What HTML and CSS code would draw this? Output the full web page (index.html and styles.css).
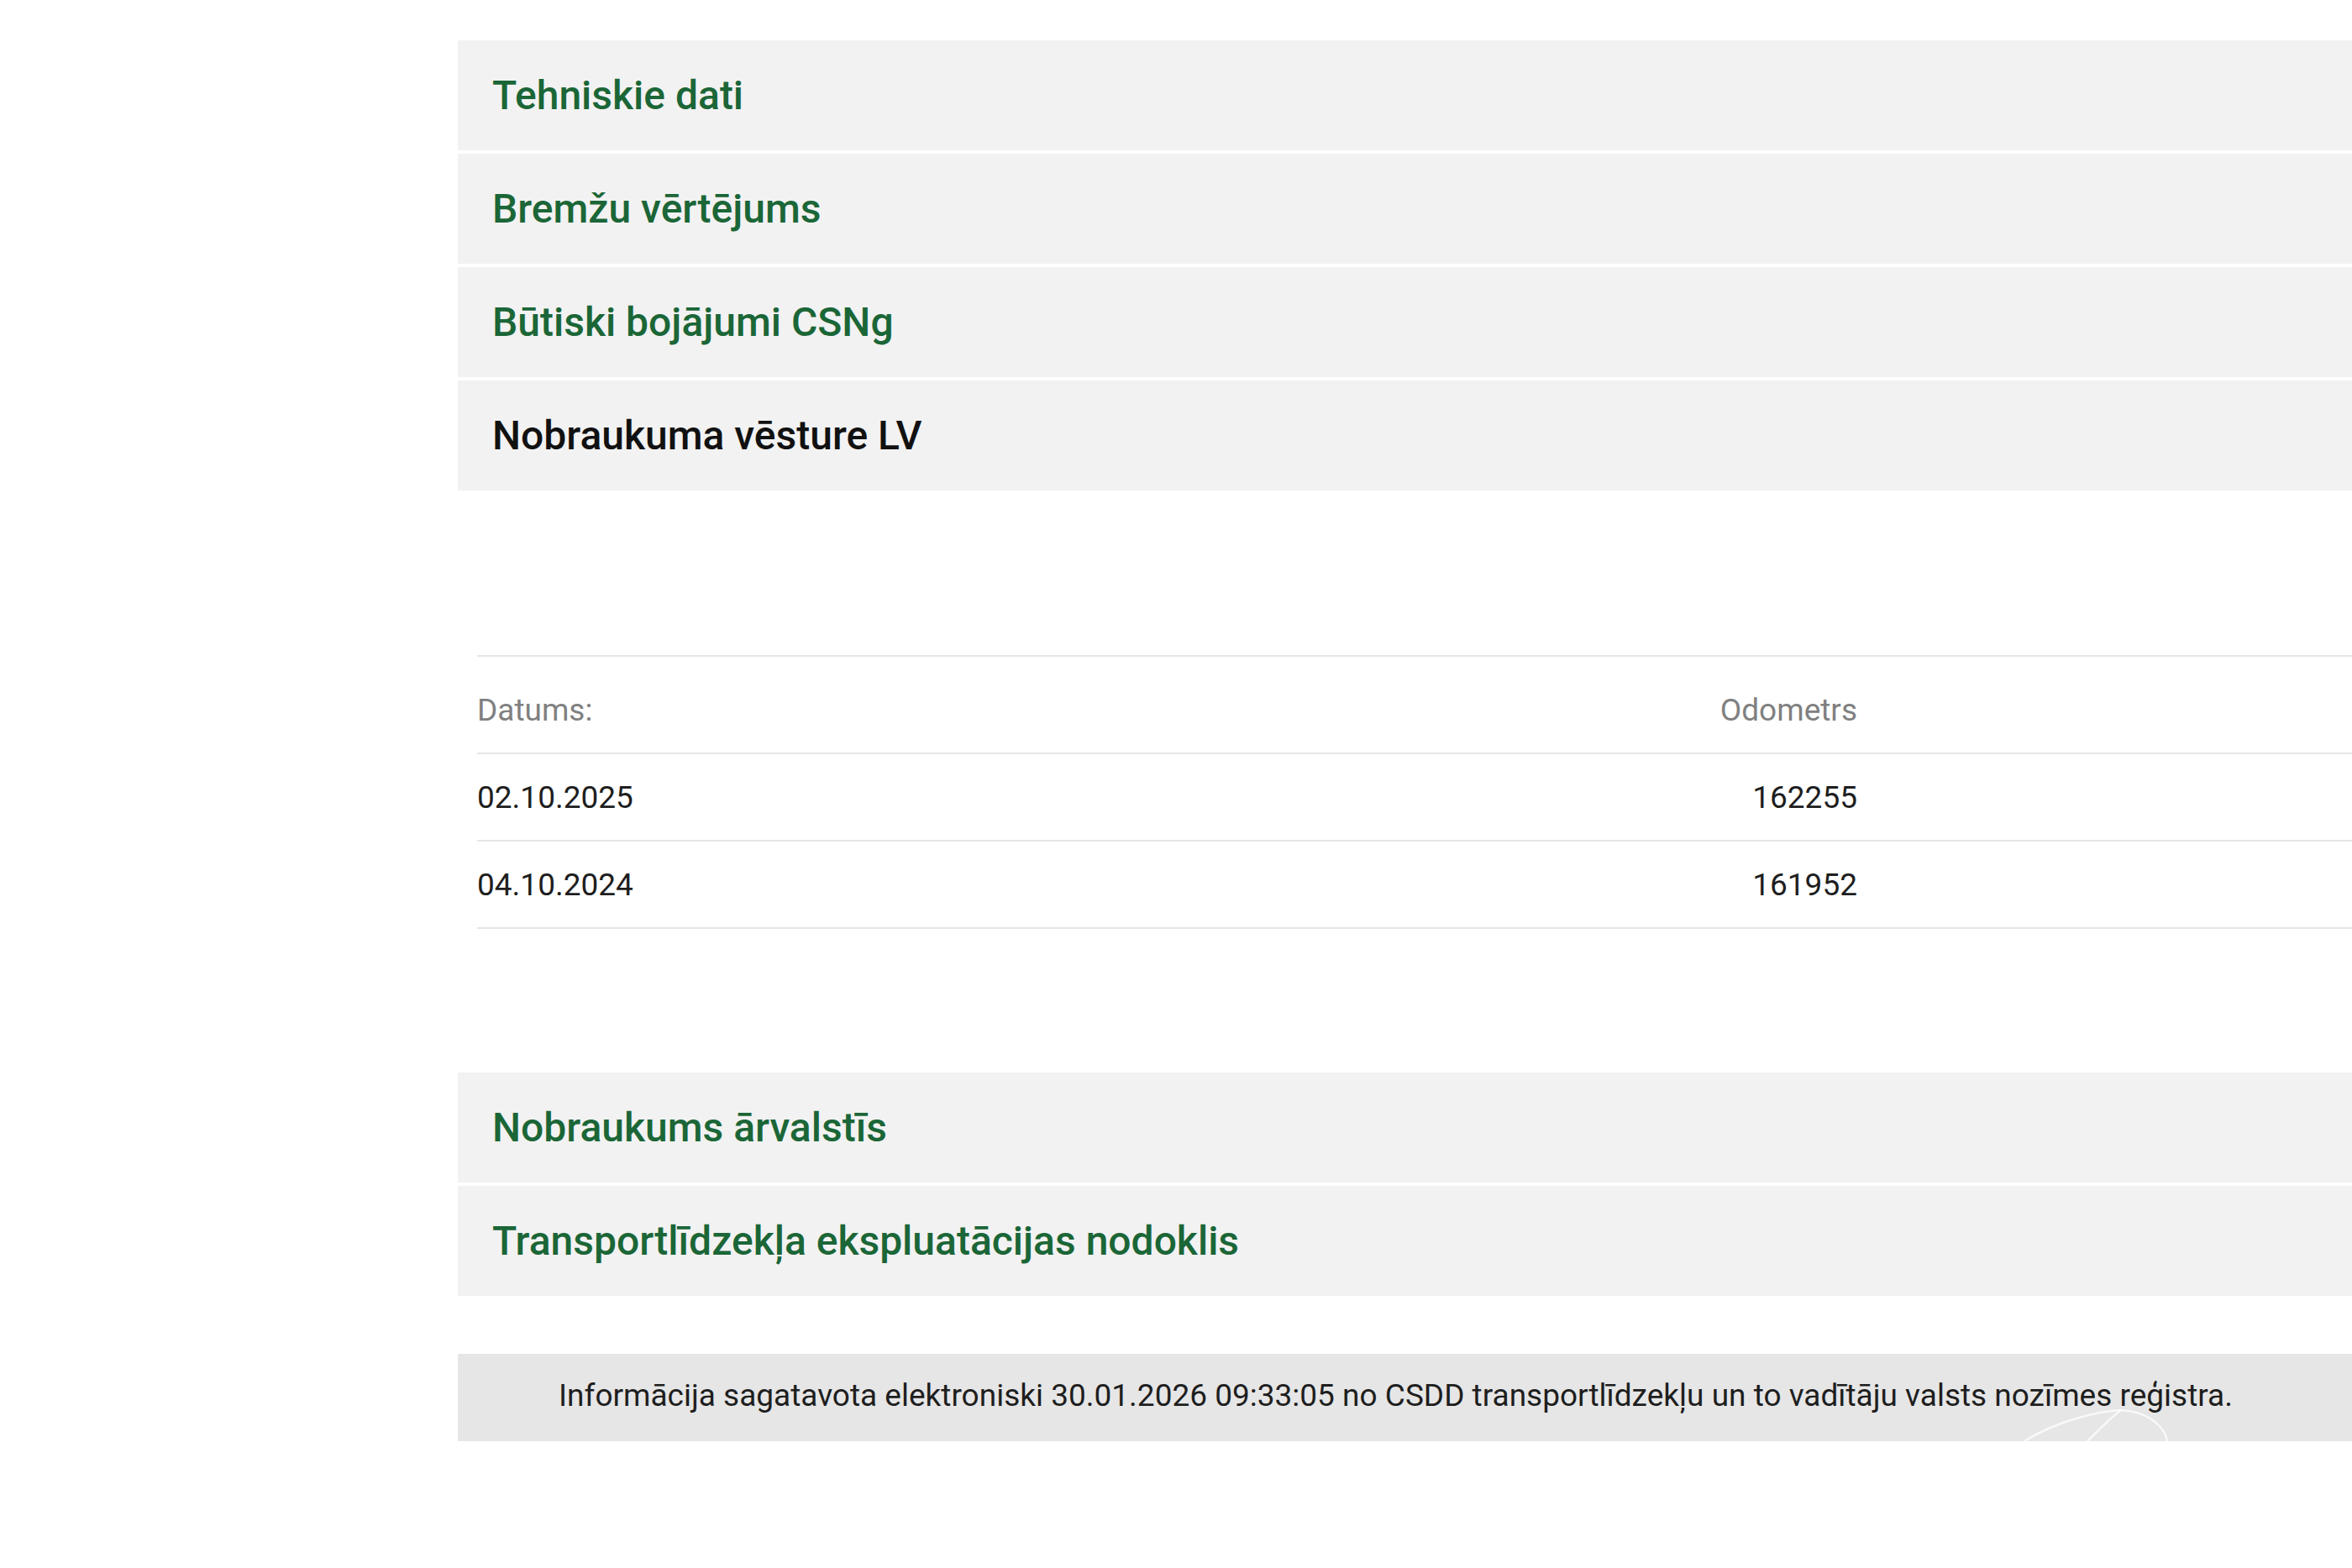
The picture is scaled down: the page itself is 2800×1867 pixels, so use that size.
FILE: index.html
```html
<!DOCTYPE html>
<html lang="lv">
<head>
    <meta charset="UTF-8">
    <title>Transportlīdzekļa informācija</title>
    <link rel="stylesheet" href="styles.css">
</head>
<body>
    <div id="content">
        <div class="acc-group">
            <div class="acc-head">Tehniskie dati</div>
            <div class="acc-head">Bremžu vērtējums</div>
            <div class="acc-head">Būtiski bojājumi CSNg</div>
            <div class="acc-head active">Nobraukuma vēsture LV</div>
        </div>

        <div class="acc-body">
            <table class="odo-table">
                <tr>
                    <th class="c-date">Datums:</th>
                    <th class="c-odo">Odometrs</th>
                    <th class="c-rest"></th>
                </tr>
                <tr>
                    <td class="c-date">02.10.2025</td>
                    <td class="c-odo">162255</td>
                    <td class="c-rest"></td>
                </tr>
                <tr>
                    <td class="c-date">04.10.2024</td>
                    <td class="c-odo">161952</td>
                    <td class="c-rest"></td>
                </tr>
            </table>
        </div>

        <div class="acc-group">
            <div class="acc-head">Nobraukums ārvalstīs</div>
            <div class="acc-head">Transportlīdzekļa ekspluatācijas nodoklis</div>
        </div>

        <div id="footer-info">
            Informācija sagatavota elektroniski 30.01.2026 09:33:05 no CSDD transportlīdzekļu un to vadītāju valsts nozīmes reģistra.
            <svg class="watermark" width="190" height="40" viewBox="0 0 190 40">
                <path d="M10 40 C50 15 100 4 125 3 C160 5 178 25 180 40" fill="none" stroke="#fff" stroke-width="2.5" opacity="0.75"/>
                <path d="M85 40 C100 25 115 10 125 3" fill="none" stroke="#fff" stroke-width="2.5" opacity="0.75"/>
            </svg>
        </div>
    </div>
</body>
</html>
```

FILE: styles.css
```css
html,body{margin:0;padding:0;background:#fff;overflow:hidden}
body{font-family:Roboto,"Liberation Sans",Arial,sans-serif;color:#1e1e1e}
#content{margin-left:545px;padding-top:48px}
.acc-group{display:flex;flex-direction:column;gap:4px}
.acc-head{height:131px;display:flex;align-items:center;padding-left:41px;background:#f2f2f2;color:#1b6637;font-size:48px;font-weight:500}
.acc-head.active{color:#111}
.acc-body{padding:196px 0 171px 23px}
.odo-table{width:100%;border-collapse:collapse;border-top:2px solid #e6e6e6;font-size:37px}
.odo-table th,.odo-table td{border-bottom:2px solid #e6e6e6;padding:0;height:102px;white-space:nowrap}
.odo-table th{height:102px;padding-top:12px;color:#808080;font-weight:400;text-align:left}
.odo-table .c-date{width:900px;text-align:left}
.odo-table .c-odo{width:743px;text-align:right}
.odo-table td{color:#1e1e1e}
#footer-info{position:relative;margin-top:69px;height:104px;box-sizing:border-box;padding:0 22px 6px 0;display:flex;align-items:center;justify-content:center;background:#e6e6e6;font-size:37px;color:#1e1e1e;overflow:hidden}
.watermark{position:absolute;left:calc(100% - 400px);bottom:0}
```
